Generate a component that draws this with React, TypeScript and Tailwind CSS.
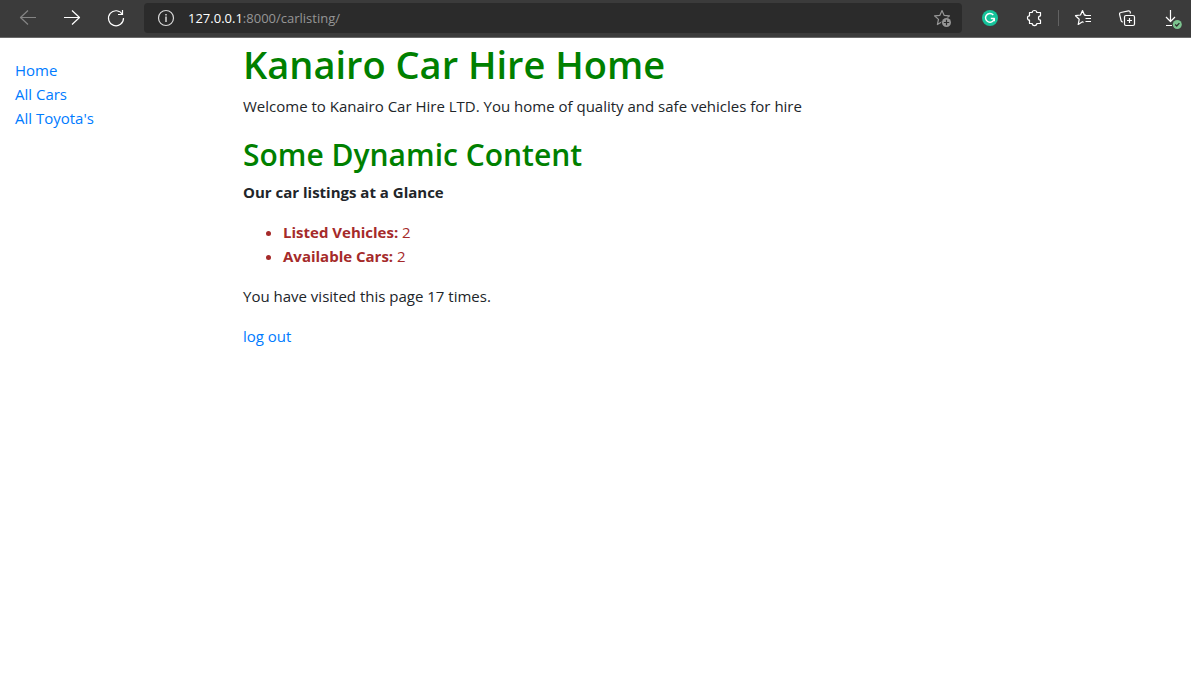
import type { ReactNode } from "react";

function Icon({ children }: { children: ReactNode }) {
  return (
    <svg
      className="size-6 shrink-0"
      viewBox="0 0 24 24"
      fill="none"
      stroke="currentColor"
      strokeWidth="1.2"
      strokeLinejoin="round"
      aria-hidden="true"
    >
      {children}
    </svg>
  );
}

function ToolButton({
  label,
  disabled,
  width = "w-11",
  children,
}: {
  label: string;
  disabled?: boolean;
  width?: string;
  children: ReactNode;
}) {
  return (
    <button
      type="button"
      aria-label={label}
      disabled={disabled}
      className={`flex h-9 shrink-0 items-center justify-center text-white disabled:text-[#858585] ${width}`}
    >
      <Icon>{children}</Icon>
    </button>
  );
}

function Toolbar() {
  return (
    <header className="flex items-start border-b border-[#696969] bg-[#3b3b3b] pb-px pl-1.5">
      <ToolButton label="Back" disabled>
        <path d="M20 11.500H4.500M12 4.500l-7.500 7 7.500 7" />
      </ToolButton>
      <ToolButton label="Forward">
        <path d="M4 11.500h15.500M12 4.500l7.500 7-7.500 7" />
      </ToolButton>
      <ToolButton label="Refresh">
        <path d="M18.500 8.500A7.500 7.500 0 1 0 19.500 12" />
        <path d="M18.500 4v4.500H14" strokeLinejoin="miter" />
      </ToolButton>

      <div className="mx-1.5 mt-[3px] flex h-[30px] min-w-0 flex-1 items-center gap-2.5 rounded bg-[#2b2b2b] pl-2.5 pr-2">
        <button type="button" aria-label="View site information" className="text-[#d8d8d8]">
          <Icon>
            <circle cx="12" cy="12" r="7.500" />
            <path d="M12 10.500V16M12 8v1.500" strokeWidth="1.500" />
          </Icon>
        </button>
        <div className="min-w-0 flex-1 truncate text-[13px] leading-5 text-[#969696]">
          <span className="text-white">127.0.0.1</span>:8000/carlisting/
        </div>
        <button type="button" aria-label="Add this page to favorites" className="text-[#969696]">
          <Icon>
            <path d="M12 4.500l2.100 4.800 5.400.5-4 3.600 1.100 5.100L12 15.700l-4.600 2.800 1.100-5.100-4-3.600 5.400-.5z" />
            <circle cx="16.500" cy="16.500" r="5.200" fill="#2b2b2b" stroke="none" />
            <circle cx="16.500" cy="16.500" r="4.500" fill="currentColor" stroke="none" />
            <path d="M16.500 13.800v5.400M13.800 16.500h5.400" stroke="#2b2b2b" />
          </Icon>
        </button>
      </div>

      <ToolButton label="Grammarly">
        <circle cx="12" cy="12" r="8" fill="#15c39a" stroke="none" />
        <path d="M15.300 9A4.400 4.400 0 1 0 16.300 12.500H12.800M16.300 12.300v3" strokeWidth="1.400" />
      </ToolButton>
      <ToolButton label="Extensions">
        <path d="M7.500 6.500H10.200C10.200 3.800 14.800 3.800 14.800 6.500H18.500V9.800C15.800 9.800 15.800 14.200 18.500 14.200V17.500H14.800C14.800 20.200 10.200 20.200 10.200 17.500H7.500V14.200C4.800 14.200 4.800 9.800 7.500 9.800Z" />
      </ToolButton>
      <div className="mx-0.5 h-4 w-px self-center bg-[#626262]" />
      <ToolButton label="Favorites">
        <path d="M15 9.100l-1.600-.2-1.900-4.400-2 4.500-5 .7 3.700 3.600-1 5.200 4.300-2.700 1 .6" />
        <path d="M13.500 9.500H20M14.500 12.500H20M14.500 15.500H20" />
      </ToolButton>
      <ToolButton label="Collections">
        <path d="M15.300 7.500V6.300a1.500 1.500 0 0 0-1.800-1.400l-7.700 1.600A1.500 1.500 0 0 0 4.600 8.300l1.500 6.300a1.500 1.500 0 0 0 1.700 1.200" />
        <rect x="9.500" y="9.500" width="10" height="10" rx="1.500" />
        <path d="M14.500 12v5M12 14.500h5" />
      </ToolButton>
      <ToolButton label="Downloads" width="w-[42px]">
        <path d="M12.500 4v11.500M8 11l4.500 4.500L17 11M8 19.500h6" />
        <circle cx="19.300" cy="18.500" r="4.500" fill="#7cc48f" stroke="none" />
        <path d="M17.200 18.500l1.500 1.500 2.700-2.900" stroke="#2b2b2b" />
      </ToolButton>
    </header>
  );
}

export default function App() {
  return (
    <div className="min-h-screen bg-white font-['Open_Sans','Noto_Sans',sans-serif] text-[15px] leading-6 text-[#212529]">
      <Toolbar />
      <div className="flex">
        <nav className="w-[228px] shrink-0 px-[15px] pt-5">
          <ul className="text-[#007bff]">
            <li><a href="#home" className="hover:underline">Home</a></li>
            <li><a href="#cars" className="hover:underline">All Cars</a></li>
            <li><a href="#toyotas" className="hover:underline">All Toyota's</a></li>
          </ul>
        </nav>
        <main className="min-w-0 flex-1 px-[15px]">
          <h1 className="mb-1 text-[38px] leading-[52px] font-semibold text-[#008000]">Kanairo Car Hire Home</h1>
          <p className="mb-4">Welcome to Kanairo Car Hire LTD. You home of quality and safe vehicles for hire</p>
          <h2 className="mb-1 text-[30px] leading-[42px] font-semibold text-[#008000]">Some Dynamic Content</h2>
          <p className="mb-4 font-bold">Our car listings at a Glance</p>
          <ul className="mb-4 list-disc pl-10 text-[#a52a2a]">
            <li><strong>Listed Vehicles:</strong> 2</li>
            <li><strong>Available Cars:</strong> 2</li>
          </ul>
          <p className="mb-4">You have visited this page 17 times.</p>
          <a href="#logout" className="text-[#007bff] hover:underline">log out</a>
        </main>
      </div>
    </div>
  );
}
